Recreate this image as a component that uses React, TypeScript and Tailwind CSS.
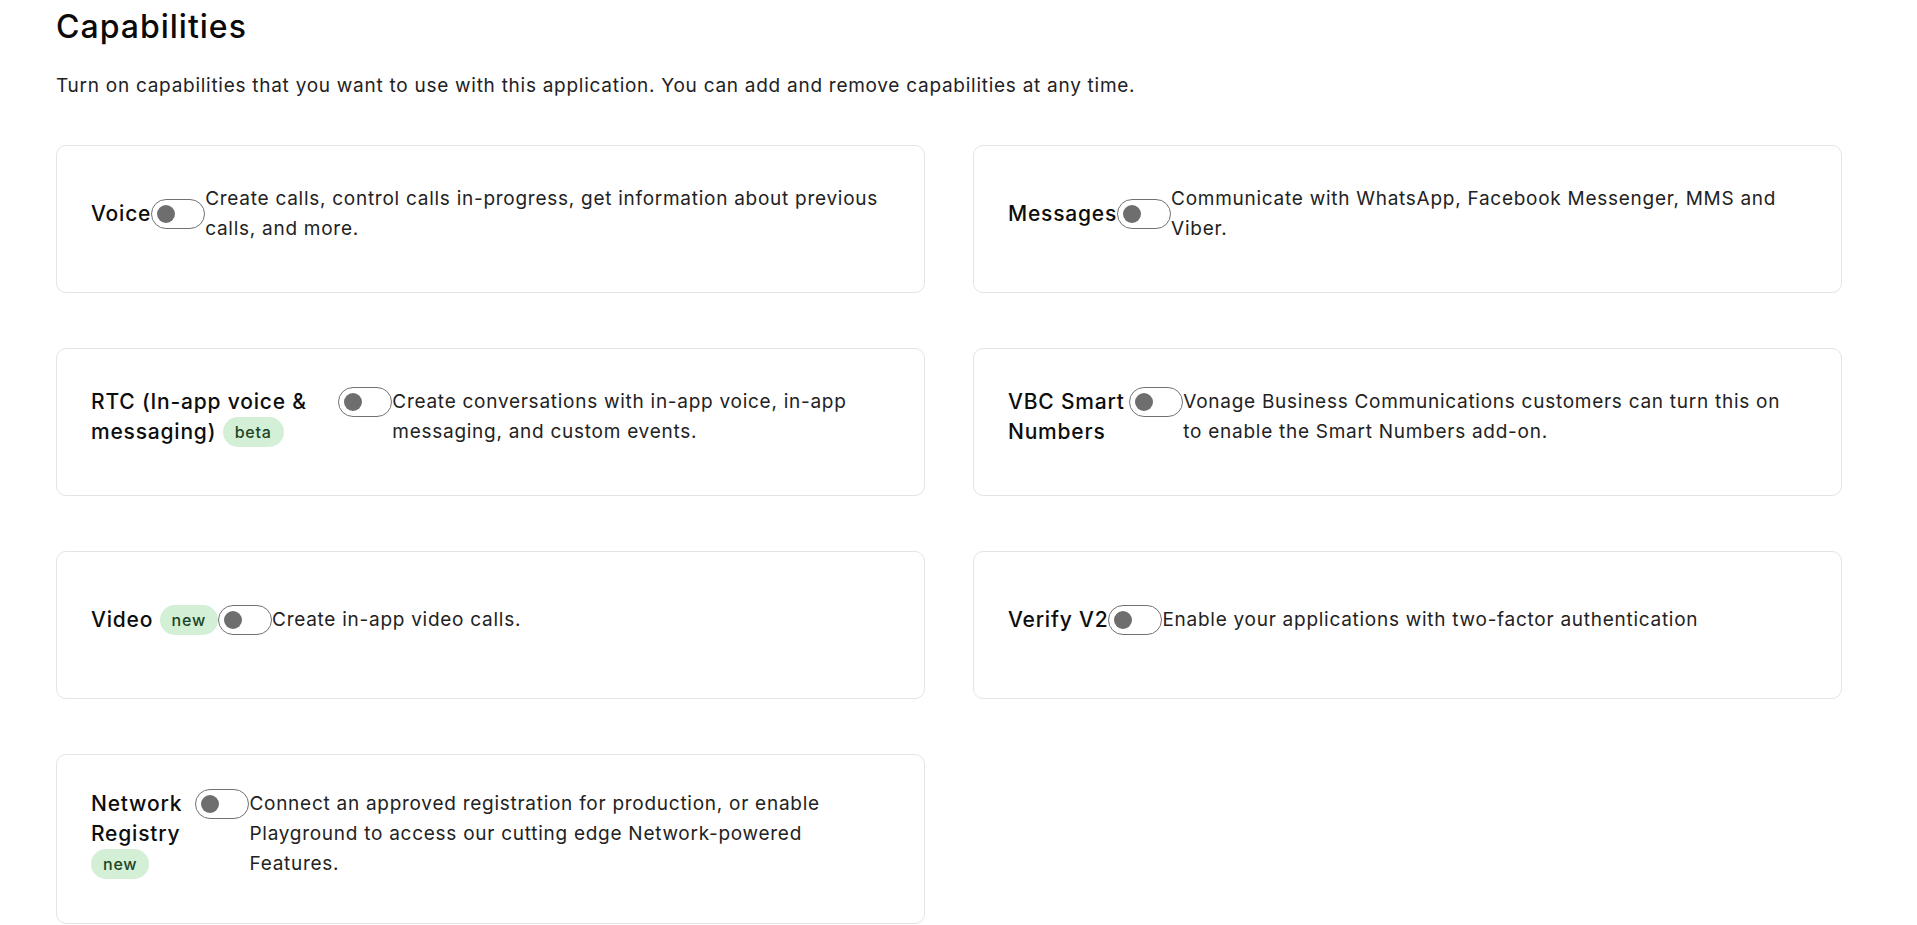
import React from "react";

type Cap = {
  name: string;
  badge?: string;
  text: string;
};

const caps: Cap[] = [
  { name: "Voice", text: "Create calls, control calls in-progress, get information about previous calls, and more." },
  { name: "Messages", text: "Communicate with WhatsApp, Facebook Messenger, MMS and Viber." },
  { name: "RTC (In-app voice & messaging)", badge: "beta", text: "Create conversations with in-app voice, in-app messaging, and custom events." },
  { name: "VBC Smart Numbers", text: "Vonage Business Communications customers can turn this on to enable the Smart Numbers add-on." },
  { name: "Video", badge: "new", text: "Create in-app video calls." },
  { name: "Verify V2", text: "Enable your applications with two-factor authentication" },
  { name: "Network Registry", badge: "new", text: "Connect an approved registration for production, or enable Playground to access our cutting edge Network-powered Features." },
];

const Toggle = () => (
  <div className="shrink-0 w-[54px] h-[30px] rounded-full border-[1.5px] border-[#727272] bg-white flex items-center pl-[5px]">
    <div className="w-[18px] h-[18px] rounded-full bg-[#6e6e6e]"></div>
  </div>
);

const CapCard: React.FC<{ item: Cap }> = ({ item }) => {
  return (
    <div className="min-h-[148px] rounded-[10px] border border-[#e4e4e4] bg-white flex items-center pl-[34px] pr-[40px] pt-[34px] pb-[44px]">
      <div className="flex items-center">
        <div className="flex items-start">
          <div className="text-[21px] leading-[30px] tracking-[0.8px] font-medium text-[#0d0d0d]">
            {item.name}
            {item.badge && (
              <>
                {" "}
                <span className="inline-block align-top rounded-[15px] bg-[#d3efd6] px-[12px] text-[16px] leading-[30px] tracking-[0.8px] font-medium text-[#1b4424]">
                  {item.badge}
                </span>
              </>
            )}
          </div>
          <Toggle />
        </div>
        <p className="text-[19px] leading-[30px] tracking-[0.73px] text-[#222222]">{item.text}</p>
      </div>
    </div>
  );
};

export default function App() {
  return (
    <div className="min-h-screen bg-white pl-[56px] pt-[7px] font-['Inter',sans-serif]">
      <h1 className="text-[32px] leading-[40px] tracking-[1px] font-medium text-[#0a0a0a]">Capabilities</h1>
      <p className="mt-[24px] text-[19px] leading-[30px] tracking-[0.73px] text-[#222222]">
        Turn on capabilities that you want to use with this application. You can add and remove capabilities at any time.
      </p>
      <div className="mt-[44px] w-[1786px] grid grid-cols-2 gap-x-[48px] gap-y-[55px]">
        {caps.map((c) => (
          <CapCard key={c.name} item={c} />
        ))}
      </div>
    </div>
  );
}
